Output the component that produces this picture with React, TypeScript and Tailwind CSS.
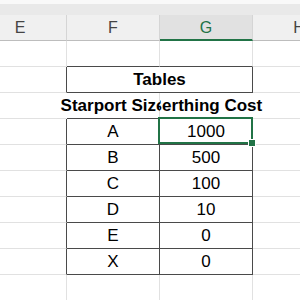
import clsx from 'clsx';

const gR = 'border-r-[#e1e1e1]';
const dR = 'border-r-[#4a4a4a]';
const nR = 'border-r-transparent';
const gB = 'border-b-[#e1e1e1]';
const dB = 'border-b-[#4a4a4a]';

type CellProps = {
  w?: string;
  r: string;
  b: string;
  bold?: boolean;
  clip?: string;
  selected?: boolean;
  children?: React.ReactNode;
};

const Cell = ({ w = 'w-[93px]', r, b, bold, clip, selected, children }: CellProps) => (
  <div
    className={clsx(
      'relative flex h-[26px] shrink-0 justify-center whitespace-nowrap border-r border-b text-[17px] leading-[25px] text-black',
      w,
      r,
      b,
      bold && 'font-bold',
      clip,
    )}
  >
    {children}
    {selected && (
      <div className="absolute -top-[2px] -left-[2px] -right-px bottom-0 z-10 border-2 border-[#217346]">
        <div className="absolute -right-[4px] -bottom-[4px] h-[6px] w-[6px] bg-[#217346] outline outline-white" />
      </div>
    )}
  </div>
);

const Row = ({ children }: { children: React.ReactNode }) => <div className="flex">{children}</div>;

const data = [
  ['A', '1000'],
  ['B', '500'],
  ['C', '100'],
  ['D', '10'],
  ['E', '0'],
  ['X', '0'],
];

const headers = ['E', 'F', 'G', 'H'];

export default function App() {
  return (
    <div className="h-[300px] w-[300px] overflow-hidden bg-white font-['Liberation_Sans',Arial,sans-serif]">
      <div className="h-[4px] bg-[#f9f9f9]" />
      <div className="h-[11px] bg-[#e9e9e9]" />
      <div className="-ml-[26px]">
        <Row>
          {headers.map(h => (
            <div
              key={h}
              className={clsx(
                'flex h-[26px] w-[93px] shrink-0 justify-center border-r border-r-[#d5d5d5] pt-[2px] text-[16px] leading-[22px]',
                h === 'G'
                  ? 'border-b-2 border-b-[#217346] bg-[#e1e1e1] text-[#217346]'
                  : 'border-b border-b-[#bdbdbd] bg-[#f0f0f0] text-[#444]',
              )}
            >
              {h}
            </div>
          ))}
        </Row>

        <Row>
          <Cell r={gR} b={gB} />
          <Cell r={gR} b={dB} />
          <Cell r={gR} b={dB} />
          <Cell r={gR} b={gB} />
        </Row>

        <Row>
          <Cell r={dR} b={gB} />
          <Cell w="w-[186px]" r={dR} b={dB} bold>
            Tables
          </Cell>
          <Cell r={gR} b={gB} />
        </Row>

        <Row>
          <Cell r={nR} b={gB} />
          <Cell r={gR} b={dB} bold clip="[clip-path:inset(0_0_0_-200px)]">
            Starport Size
          </Cell>
          <Cell r={nR} b={dB} bold clip="[clip-path:inset(0_-200px_0_0)]">
            Berthing Cost
          </Cell>
          <Cell r={gR} b={gB} />
        </Row>

        {data.map(([size, cost], i) => (
          <Row key={size + i}>
            <Cell r={dR} b={gB} />
            <Cell r={dR} b={dB}>
              {size}
            </Cell>
            <Cell r={dR} b={dB} selected={i === 0}>
              {cost}
            </Cell>
            <Cell r={gR} b={gB} />
          </Row>
        ))}

        <Row>
          <Cell r={gR} b={gB} />
          <Cell r={gR} b={gB} />
          <Cell r={gR} b={gB} />
          <Cell r={gR} b={gB} />
        </Row>
      </div>
    </div>
  );
}
